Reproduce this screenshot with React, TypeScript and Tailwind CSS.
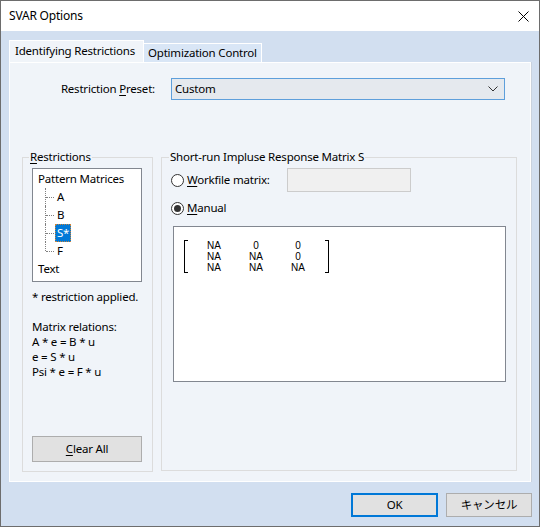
import React from "react";

function Radio({ checked }: { checked?: boolean }) {
  return (
    <span className="w-[13px] h-[13px] rounded-full border border-[#333333] bg-white flex items-center justify-center shrink-0">
      {checked && <span className="w-[7px] h-[7px] rounded-full bg-[#333333]" />}
    </span>
  );
}

function TreeChild({ label, last, selected }: { label: string; last?: boolean; selected?: boolean }) {
  return (
    <div className="flex items-center h-[18px]">
      <div className="w-[7px]" />
      <div className="relative w-[10px] h-full">
        <div
          className={
            last
              ? "absolute left-0 top-0 h-[9px] border-l border-dotted border-[#808080]"
              : "absolute left-0 top-0 h-full border-l border-dotted border-[#808080]"
          }
        />
        <div className="absolute left-[1px] top-[9px] w-[8px] border-t border-dotted border-[#808080]" />
      </div>
      {selected ? (
        <span className="h-[18px] px-[1px] pb-[1px] flex items-center bg-[#0078d7] text-white border border-dotted border-[#c8843c] leading-none">
          {label}
        </span>
      ) : (
        <span className="pl-[2px] pb-[1px]">{label}</span>
      )}
    </div>
  );
}

export default function App() {
  const rows = [
    ["NA", "0", "0"],
    ["NA", "NA", "0"],
    ["NA", "NA", "NA"],
  ];
  return (
    <div className="w-[540px] h-[527px] border border-[#6d6d6d] flex flex-col bg-[#d2dff0] text-black text-[11.5px] tracking-[-0.2px] whitespace-nowrap font-['Noto_Sans','Noto_Sans_CJK_JP',sans-serif] leading-[15px]">
      {/* Title bar */}
      <div className="h-[30px] bg-white flex items-center justify-between pl-[8px] shrink-0">
        <span className="text-[12px] pb-[1px]">SVAR Options</span>
        <div className="w-[30px] h-full flex items-center justify-center mr-[1px]">
          <svg width="11" height="11" viewBox="0 0 11 11">
            <path d="M0.5 0.5 L10.5 10.5 M10.5 0.5 L0.5 10.5" stroke="#000" strokeWidth="1" />
          </svg>
        </div>
      </div>

      {/* Body */}
      <div className="flex-1 flex flex-col pl-[8px] pr-[8px] pt-[9px]">
        {/* Tabs */}
        <div className="flex items-end h-[22px]">
          <div className="w-[135px] h-[22px] bg-[#f0f4f9] border-t border-l border-r border-white pl-[5px] flex items-center pb-[3px]">
            Identifying Restrictions
          </div>
          <div className="w-[118px] h-[19px] bg-[#d9e6f6] border-t border-r border-white pl-[4px] flex items-center pb-[1px]">
            Optimization Control
          </div>
        </div>

        {/* Panel */}
        <div className="h-[420px] bg-[#f0f4f9] border border-white shadow-[1px_0_0_#c9d2de] flex flex-col">
          <div className="flex items-center mt-[15px]">
            <div className="w-[145px] text-right pb-[1px]">
              Restriction <u className="underline-offset-2">P</u>reset:
            </div>
            <div className="ml-[16px] w-[334px] h-[22px] border border-[#5e9fdb] bg-[#e5e9ee] flex items-center justify-between pl-[3px] pr-[6px]">
              <span className="pb-[1px]">Custom</span>
              <svg width="10" height="6" viewBox="0 0 10 6">
                <path d="M0.5 0.5 L5 5 L9.5 0.5" stroke="#333" strokeWidth="1" fill="none" />
              </svg>
            </div>
          </div>

          <div className="flex mt-[57px] ml-[12px] gap-[8px]">
            {/* Restrictions group */}
            <div className="relative w-[131px] h-[315px] border border-[#dcdcdc] flex flex-col pl-[9px] pt-[10px] pb-[9px]">
              <span className="absolute -top-[9px] left-[6px] bg-[#f0f4f9] px-[1px]">
                <u className="underline-offset-2">R</u>estrictions
              </span>
              <div className="w-[110px] h-[114px] border border-[#828790] bg-white pl-[5px] pt-[1px]">
                <div className="h-[18px] flex items-center pb-[1px]">Pattern Matrices</div>
                <TreeChild label="A" />
                <TreeChild label="B" />
                <TreeChild label="S*" selected />
                <TreeChild label="F" last />
                <div className="h-[18px] flex items-center pb-[1px]">Text</div>
              </div>
              <div className="mt-[7px]">* restriction applied.</div>
              <div className="mt-[15px]">Matrix relations:</div>
              <div>A * e = B * u</div>
              <div>e = S * u</div>
              <div>Psi * e = F * u</div>
              <div className="mt-auto w-[110px] h-[26px] border border-[#adadad] bg-[#e1e1e1] flex items-center justify-center pb-[2px]">
                <span>
                  <u className="underline-offset-2">C</u>lear All
                </span>
              </div>
            </div>

            {/* Short-run group */}
            <div className="relative w-[356px] h-[314px] border border-[#dcdcdc] flex flex-col pl-[9px] pt-[10px]">
              <span className="absolute -top-[9px] left-[7px] bg-[#f0f4f9] px-[1px]">
                Short-run Impluse Response Matrix S
              </span>
              <div className="flex items-center h-[24px]">
                <div className="w-[116px] flex items-center">
                  <Radio />
                  <span className="ml-[3px] pb-[1px]">
                    <u className="underline-offset-2">W</u>orkfile matrix:
                  </span>
                </div>
                <div className="w-[124px] h-[24px] bg-[#f0f0f0] border border-[#cccccc]" />
              </div>
              <div className="flex items-center h-[16px] mt-[8px]">
                <Radio checked />
                <span className="ml-[3px] pb-[1px]">
                  <u className="underline-offset-2">M</u>anual
                </span>
              </div>
              <div className="ml-[2px] mt-[10px] w-[333px] h-[156px] border border-[#828790] bg-white pl-[10px] pt-[13px]">
                <div className="flex font-['Liberation_Sans',sans-serif] text-[10px] tracking-normal leading-[11px]">
                  <div className="w-[4px] h-[33px] border-l border-t border-b border-black" />
                  <div className="ml-[5px] grid grid-cols-[42px_42px_42px]">
                    {rows.map((r, i) =>
                      r.map((c, j) => (
                        <div key={i + "-" + j} className="text-center h-[11px]">
                          {c}
                        </div>
                      ))
                    )}
                  </div>
                  <div className="ml-[6px] w-[4px] h-[33px] border-r border-t border-b border-black" />
                </div>
              </div>
            </div>
          </div>
        </div>

        {/* Buttons */}
        <div className="flex justify-end gap-[8px] mt-[11px] -mr-[1px]">
          <div className="w-[87px] h-[24px] border-2 border-[#0078d7] bg-[#e1e1e1] flex items-center justify-center pb-[1px]">
            OK
          </div>
          <div className="w-[86px] h-[24px] border border-[#adadad] bg-[#e1e1e1] flex items-center justify-center pb-[1px]">
            キャンセル
          </div>
        </div>
      </div>
    </div>
  );
}
